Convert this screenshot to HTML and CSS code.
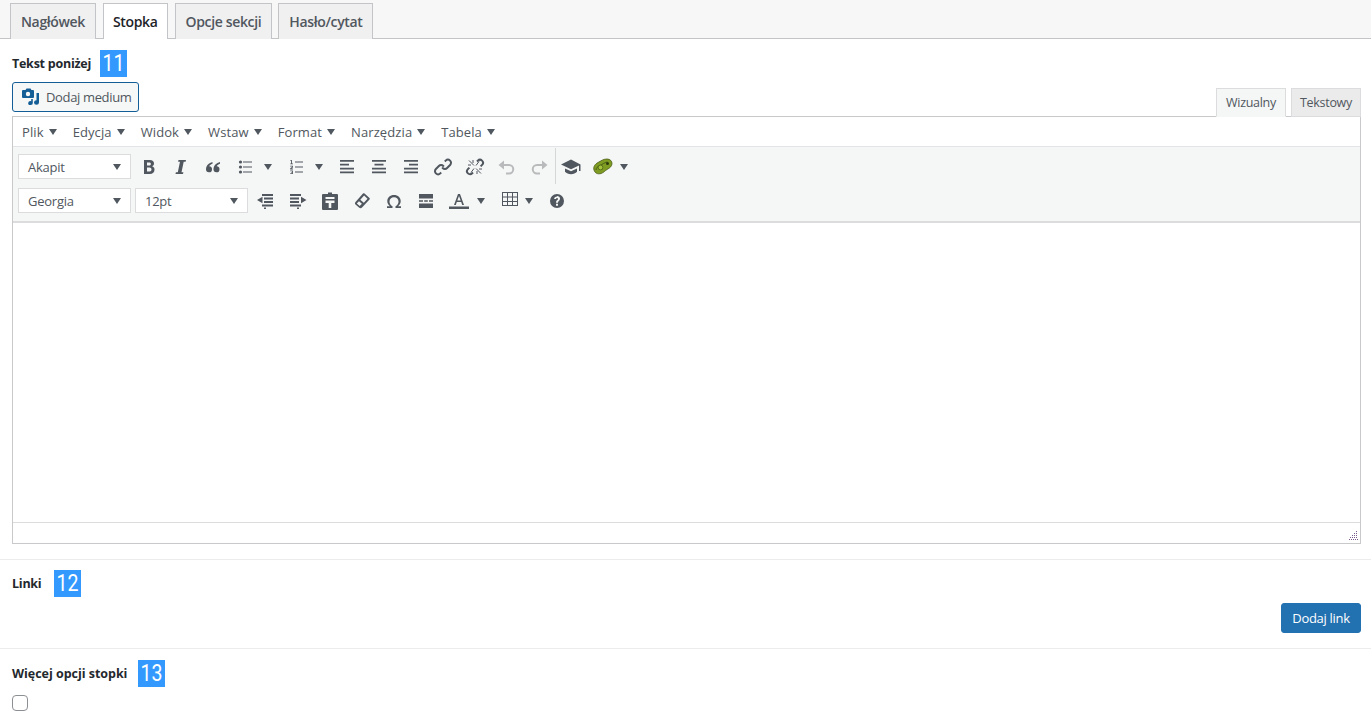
FILE: index.html
```html
<!DOCTYPE html>
<html lang="pl">
<head>
<meta charset="utf-8">
<title>Stopka</title>
<link rel="stylesheet" href="styles.css">
</head>
<body>
<nav class="tabs">
  <a class="tab">Nagłówek</a>
  <a class="tab active">Stopka</a>
  <a class="tab">Opcje sekcji</a>
  <a class="tab">Hasło/cytat</a>
</nav>

<section class="field first">
  <div class="label-row"><label class="label">Tekst poniżej</label><span class="badge"><span>11</span></span></div>
  <div class="editor-head">
    <button class="media-btn">
      <svg class="media-icon" viewBox="0 0 18 18"><path fill-rule="evenodd" d="M1 2h2.500L4.500.5h4L9.500 2H11a1 1 0 0 1 1 1v6a1 1 0 0 1-1 1H1a1 1 0 0 1-1-1V3a1 1 0 0 1 1-1zm5 1.800a2.200 2.200 0 1 0 0 4.400 2.200 2.200 0 0 0 0-4.400z"/><path d="M14.500 5H17v9.500a2.500 2.200 0 1 1-2.500-2.200zM9.200 11h1.600v4a2.300 2 0 1 1-1.600-1.800z"/></svg>
      Dodaj medium
    </button>
    <div class="mode-tabs">
      <a class="mode active">Wizualny</a>
      <a class="mode">Tekstowy</a>
    </div>
  </div>
  <div class="editor">
    <div class="menubar">
      <span class="menu">Plik<i class="caret"></i></span>
      <span class="menu">Edycja<i class="caret"></i></span>
      <span class="menu">Widok<i class="caret"></i></span>
      <span class="menu">Wstaw<i class="caret"></i></span>
      <span class="menu">Format<i class="caret"></i></span>
      <span class="menu">Narzędzia<i class="caret"></i></span>
      <span class="menu">Tabela<i class="caret"></i></span>
    </div>
    <div class="toolbar">
      <div class="row">
        <span class="select">Akapit<i class="caret"></i></span>
        <div class="buttons">
          <span class="tb"><svg viewBox="0 0 20 20"><path fill-rule="evenodd" d="M5 3h5.800c2.700 0 4.200 1.300 4.200 3.400 0 1.300-.7 2.300-1.900 2.800 1.500.4 2.400 1.600 2.400 3.200 0 2.800-1.800 4.600-4.700 4.600H5zm3 2.400v3h2.300c1 0 1.600-.6 1.600-1.500s-.6-1.500-1.600-1.500zm0 5.200v4h2.600c1.200 0 1.900-.8 1.900-2s-.8-2-2-2z"/></svg></span>
          <span class="tb"><svg viewBox="0 0 20 20"><path d="M7.500 3H15l-.4 1.800h-1.900L10.500 15.200h1.900L12 17H4.500l.4-1.800h1.900L9 4.800H7.100z"/></svg></span>
          <span class="tb"><svg viewBox="0 0 20 20"><path d="M9.500 5C6 6 3 8.500 3 12.300a3 3 0 1 0 3.200-3c.3-1 1.500-2 3.300-2.600zM17 5c-3.500 1-6.500 3.500-6.500 7.300a3 3 0 1 0 3.200-3c.3-1 1.500-2 3.300-2.600z"/></svg></span>
          <span class="tb split"><svg viewBox="0 0 20 20"><path d="M8 4.500h9v1H8zm0 5h9v1H8zm0 5h9v1H8z"/><circle cx="5.500" cy="5" r="1.600"/><circle cx="5.500" cy="10" r="1.600"/><circle cx="5.500" cy="15" r="1.600"/></svg><i class="caret"></i></span>
          <span class="tb split"><svg viewBox="0 0 20 20"><path d="M9 4.500h8v1H9zm0 5h8v1H9zm0 5h8v1H9z"/><path d="M4.500 3h1.400v3.500H7v.8H4.300v-.8h.7V3.900h-.5zM4.200 8.700h2.700v1.800L5.400 11.600h1.600v.8H4.200v-1.200l1.800-1.300v-.4H4.200zM4.200 13.400h2.700v3.700H4.200v-.8h1.800v-.7H5v-.7h1v-.7H4.200z"/></svg><i class="caret"></i></span>
          <span class="tb"><svg viewBox="0 0 20 20"><path d="M3 3h14v1.800H3zM3 6.800h9v1.800H3zM3 10.700h14v1.800H3zM3 14.500h14v1.800H3z"/></svg></span>
          <span class="tb"><svg viewBox="0 0 20 20"><path d="M3 3h14v1.800H3zM5.500 6.800h9v1.800h-9zM3 10.700h14v1.800H3zM3 14.500h14v1.800H3z"/></svg></span>
          <span class="tb"><svg viewBox="0 0 20 20"><path d="M3 3h14v1.800H3zM8 6.800h9v1.800H8zM3 10.700h14v1.800H3zM3 14.500h14v1.800H3z"/></svg></span>
          <span class="tb"><svg class="line" viewBox="0 0 20 20"><path d="M11.800 4.500l.9-.9a3.100 3.100 0 0 1 4.400 4.400l-3 3a3.100 3.100 0 0 1-4.400 0l-.5-.6"/><path d="M8.200 15.500l-.9.9a3.100 3.100 0 0 1-4.400-4.400l3-3a3.100 3.100 0 0 1 4.400 0l.5.6"/></svg></span>
          <span class="tb"><svg class="line" viewBox="0 0 20 20"><path d="M12 4.500l.8-.8a3 3 0 0 1 4.300 4.200l-1.500 1.500M8 15.500l-.8.8a3 3 0 0 1-4.300-4.200l1.500-1.500"/><path class="thin" d="M4 3.500l5 5M16 16.500l-5-5M11 8.500l3-4M9 11.500l-3 4M8 3v3M12 17v-3M3 8h3M17 12h-3"/></svg></span>
          <span class="tb"><svg class="line off" viewBox="0 0 20 20"><path d="M5 8h7a4 4 0 0 1 0 8.500H9"/><path class="tip" d="M7 3.500v9L1.500 8z"/></svg></span>
          <span class="tb"><svg class="line off" viewBox="0 0 20 20"><path d="M15 8H8a4 4 0 0 0 0 8.500h3"/><path class="tip" d="M13 3.500v9L18.500 8z"/></svg></span>
          <i class="sep"></i>
          <span class="tb"><svg viewBox="0 0 20 20"><path d="M10 2.500L0 7.500l10 4.700 8-3.800v5.600h1.500V7.500zM4 11.500v3.300c1.500 1.600 3.500 2.500 6 2.500s4.500-.9 6-2.500v-3.300l-6 2.800z"/></svg></span>
          <span class="tb wide"><svg viewBox="0 0 20 20"><path class="avo" d="M1 13c-1-3 1-6 4-7.500 3-1.500 5-3.500 9-3.500 3 0 5 2 5 4.500S17 11 14 12.500c-2 1.200-3 3-6 4-3 .9-6 0-7-3.500z"/><path class="avo-line" d="M3 13c0-2 1.500-3.500 4-4.500s4-3 7.500-3.500"/><circle class="avo-pit" cx="7.500" cy="10.500" r="2.400"/><circle class="avo-dot" cx="14.500" cy="6.500" r="1.500"/></svg><i class="caret"></i></span>
        </div>
      </div>
      <div class="row">
        <span class="select">Georgia<i class="caret"></i></span>
        <span class="select">12pt<i class="caret"></i></span>
        <div class="buttons second">
          <span class="tb"><svg viewBox="0 0 20 20"><path d="M7 3h11v2H7zM9 6.500h9v2H9zM9 10h9v2H9zM7 13.500h11v2H7zM9 16.500h2V18H9zM7.500 5.800v6.400L2 9z"/></svg></span>
          <span class="tb shift"><svg viewBox="0 0 20 20"><path d="M1 3h11v2H1zM1 6.500h9v2H1zM1 10h9v2H1zM1 13.500h11v2H1zM8 16.500h2V18H8zM12 5.800v6.400L17.500 9z"/></svg></span>
          <span class="tb"><svg viewBox="0 0 20 20"><path fill-rule="evenodd" d="M8 1.500h4V3h5a1 1 0 0 1 1 1v14a1 1 0 0 1-1 1H3a1 1 0 0 1-1-1V4a1 1 0 0 1 1-1h5zM5.500 6v2h9V6zM5.500 9.500V12h3.200v5h2.600v-5h3.200V9.500z"/></svg></span>
          <span class="tb"><svg viewBox="0 0 20 20"><path fill-rule="evenodd" d="M12.500 2.500l5 4.500c.5.500.5 1 0 1.500L10 16.500c-.8.900-2 .9-3 0l-3.500-3c-.7-.7-.7-1.700 0-2.500l7.500-8.500c.5-.5 1-.5 1.500 0zm-.4 2L8.300 8.700l3.500 3.100 3.700-4.100zM7 10.200l-2.200 2.300 2.900 2.500 2.200-2.200z"/></svg></span>
          <span class="tb"><svg viewBox="0 0 20 20"><path d="M3 17h5.500v-1.800c-1.900-.9-3-2.600-3-4.700 0-2.600 1.800-4.300 4.500-4.300s4.500 1.700 4.500 4.300c0 2.100-1.100 3.800-3 4.700V17H17v-1.800h-3c1.600-1.100 2.700-2.900 2.700-4.900C16.700 6.500 14 4 10 4S3.300 6.500 3.300 10.300c0 2 1.100 3.800 2.700 4.900H3z"/></svg></span>
          <span class="tb"><svg viewBox="0 0 20 20"><path d="M3 3h14v4.500H3zM3 9.300h4v1.500H3zM8.200 9.300h3.600v1.500H8.200zM13 9.300h4v1.500h-4zM3 12.500h14V17H3z"/></svg></span>
          <span class="tb color"><svg viewBox="0 0 20 20"><path fill-rule="evenodd" d="M9 3h2l4 11h-1.800l-1-3H7.800l-1 3H5zm1 2L8.300 9.500h3.400z"/><rect y="15.500" width="20" height="2.500"/></svg><i class="caret"></i></span>
          <span class="tb table"><svg viewBox="0 0 20 20"><path fill-rule="evenodd" d="M2 1h16v14H2zm1 1v3.500h4V2zm5 0v3.500h4V2zm5 0v3.500h4V2zM3 6.500V10h4V6.500zm5 0V10h4V6.500zm5 0V10h4V6.500zM3 11v3h4v-3zm5 0v3h4v-3zm5 0v3h4v-3z"/></svg><i class="caret"></i></span>
          <span class="tb"><svg viewBox="0 0 20 20"><path fill-rule="evenodd" d="M10 3a7 7 0 1 1 0 14 7 7 0 0 1 0-14zm-1 9.800v1.900h2v-1.900zM10 5.500c-1.700 0-2.800.9-2.900 2.500h1.900c.1-.6.400-.9 1-.9s1 .3 1 .8c0 1-2 1.300-2 3.400v.4h2v-.3c0-1.500 2-1.600 2-3.700 0-1.600-1.200-2.700-3-2.700z"/></svg></span>
        </div>
      </div>
    </div>
    <div class="content"></div>
    <div class="status"><svg class="grip" viewBox="0 0 9 9"><path d="M7 0h1v1H7zM5 2h1v1H5zM7 2h1v1H7zM3 4h1v1H3zM5 4h1v1H5zM7 4h1v1H7zM1 6h1v1H1zM3 6h1v1H3zM5 6h1v1H5zM7 6h1v1H7zM0 8h1v1H0zM2 8h1v1H2zM4 8h1v1H4zM6 8h1v1H6zM8 8h1v1H8z"/></svg></div>
  </div>
</section>

<section class="field links">
  <div class="label-row"><label class="label">Linki</label><span class="badge"><span>12</span></span></div>
  <div class="actions"><button class="primary">Dodaj link</button></div>
</section>

<section class="field more">
  <div class="label-row"><label class="label">Więcej opcji stopki</label><span class="badge"><span>13</span></span></div>
  <input class="check" type="checkbox">
</section>
</body>
</html>
```
FILE: styles.css
```css
* { box-sizing: border-box; }
html, body { margin: 0; padding: 0; }
body {
  background: #fff;
  color: #32373c;
  font-family: "Open Sans", "Noto Sans", sans-serif;
  font-size: 13px;
  height: 724px;
  overflow: hidden;
}
svg { display: block; fill: #50575e; }

.tabs {
  display: flex;
  gap: 7px;
  height: 39px;
  padding: 3px 0 0 10px;
  background: #f7f7f7;
  border-bottom: 1px solid #c3c4c7;
}
.tab {
  height: 36px;
  padding: 0 10px;
  display: flex;
  align-items: center;
  background: #f0f0f1;
  border: 1px solid #c3c4c7;
  border-bottom: 0;
  color: #50575e;
  font-size: 14px;
  font-weight: 600;
  letter-spacing: -.35px;
  white-space: nowrap;
}
.tab.active { background: #fff; color: #1d2327; padding: 0 9px; }
.tab:last-child { margin-left: -1px; }

.field { padding: 0 10px 0 12px; }
.first { padding-top: 11px; padding-bottom: 15px; border-bottom: 1px solid #ececec; }
.label-row { display: flex; align-items: center; height: 27px; }
.label { font-weight: 700; font-size: 12.500px; color: #23282d; letter-spacing: -.25px; margin-right: 9px; }
.links .label { margin-right: 13px; }
.more .label { letter-spacing: -.03px; margin-right: 11px; }
.badge {
  width: 27px;
  height: 27px;
  background: #3399ff;
  color: #fff;
  font-family: Roboto, sans-serif;
  font-size: 23px;
  line-height: 27px;
  text-align: center;
}
.badge span { display: block; transform: scaleX(.85); }

.editor-head {
  display: flex;
  justify-content: space-between;
  align-items: flex-end;
  margin-top: 5px;
  height: 35px;
  margin-bottom: -1px;
}
.media-btn {
  align-self: flex-start;
  display: flex;
  align-items: center;
  gap: 6px;
  height: 30px;
  width: 127px;
  padding: 0 0 0 9px;
  background: #f6f7f7;
  border: 1px solid #135e96;
  border-radius: 3px;
  color: #50575e;
  font: 13px "Open Sans", sans-serif;
  letter-spacing: -.35px;
  white-space: nowrap;
}
.media-icon { width: 18px; height: 18px; fill: #135e96; flex: none; }
.mode-tabs { display: flex; gap: 5px; position: relative; z-index: 1; }
.mode {
  width: 70px;
  height: 29px;
  display: flex;
  align-items: center;
  justify-content: center;
  border: 1px solid #dcdcde;
  background: #ebebeb;
  color: #50575e;
  font-size: 12.500px;
  letter-spacing: -.3px;
}
.mode.active { background: #f5f6f6; border-bottom-color: #f5f6f6; }

.editor { border: 1px solid #c9c9cb; height: 428px; display: flex; flex-direction: column; }
.menubar {
  height: 30px;
  display: flex;
  align-items: center;
  gap: 16px;
  padding-left: 9px;
  border-bottom: 1px solid #e2e4e7;
  color: #50575e;
  letter-spacing: .1px;
}
.menu { display: flex; align-items: center; gap: 5px; }
.caret {
  display: block;
  width: 0;
  height: 0;
  border-left: 4px solid transparent;
  border-right: 4px solid transparent;
  border-top: 6px solid #50575e;
  flex: none;
}
.toolbar {
  height: 76px;
  padding: 7px 0 0 5px;
  background: #f5f6f6;
  border-bottom: 2px solid #dcdcde;
  display: flex;
  flex-direction: column;
  gap: 9px;
}
.row { display: flex; gap: 4px; height: 25px; align-items: center; }
.select {
  width: 113px;
  height: 25px;
  padding: 0 9px;
  display: flex;
  align-items: center;
  justify-content: space-between;
  background: #fff;
  border: 1px solid #dcdcde;
  color: #50575e;
  letter-spacing: -.25px;
}
.buttons { display: flex; align-items: center; margin: 1px 0 0 -2px; }
.second { margin-left: -3px; }
.tb {
  width: 32px;
  height: 25px;
  display: flex;
  align-items: center;
  padding-left: 6px;
  gap: 4px;
  flex: none;
}
.tb svg { width: 20px; height: 20px; flex: none; }
.split { width: 51px; gap: 9px; }
.wide { width: 50px; gap: 7px; }
.color { width: 52px; gap: 8px; padding-left: 7px; }
.table { width: 47px; gap: 5px; }
.shift { padding-left: 8px; width: 33px; }
.sep { width: 1px; height: 36px; background: #d5d6d8; margin-top: -2px; flex: none; }
.sep + .tb { margin-left: -1px; }
.line { fill: none; stroke: #50575e; stroke-width: 2; }
.line .thin { stroke-width: 1; }
.line.off { stroke: #b8babb; }
.line .tip { fill: #b8babb; stroke: none; }
.avo { fill: #7f9c22; stroke: #4a5c16; stroke-width: .8; }
.avo-line { fill: none; stroke: #4a5c16; stroke-width: 1; }
.avo-pit { fill: #a3c43a; stroke: #4a5c16; stroke-width: .8; }
.avo-dot { fill: #2e3a0c; }

.content { flex: 1; background: #fff; }
.status {
  height: 21px;
  border-top: 1px solid #dcdcde;
  display: flex;
  justify-content: flex-end;
  align-items: flex-end;
  padding: 0 2px 3px 0;
}
.grip { width: 9px; height: 9px; fill: #7a5a8a; }

.links { padding-top: 10px; height: 89px; border-bottom: 1px solid #ececec; }
.actions { display: flex; justify-content: flex-end; margin-top: 6px; }
.primary {
  width: 80px;
  height: 30px;
  background: #2271b1;
  border: 1px solid #2271b1;
  border-radius: 3px;
  color: #fff;
  font: 13px "Open Sans", sans-serif;
  letter-spacing: -.3px;
  padding: 0;
}
.more { padding-top: 11px; }
.check {
  display: block;
  width: 16px;
  height: 16px;
  margin: 8px 0 0;
  appearance: none;
  border: 1px solid #8c8f94;
  border-radius: 4px;
  background: #fff;
}
```
